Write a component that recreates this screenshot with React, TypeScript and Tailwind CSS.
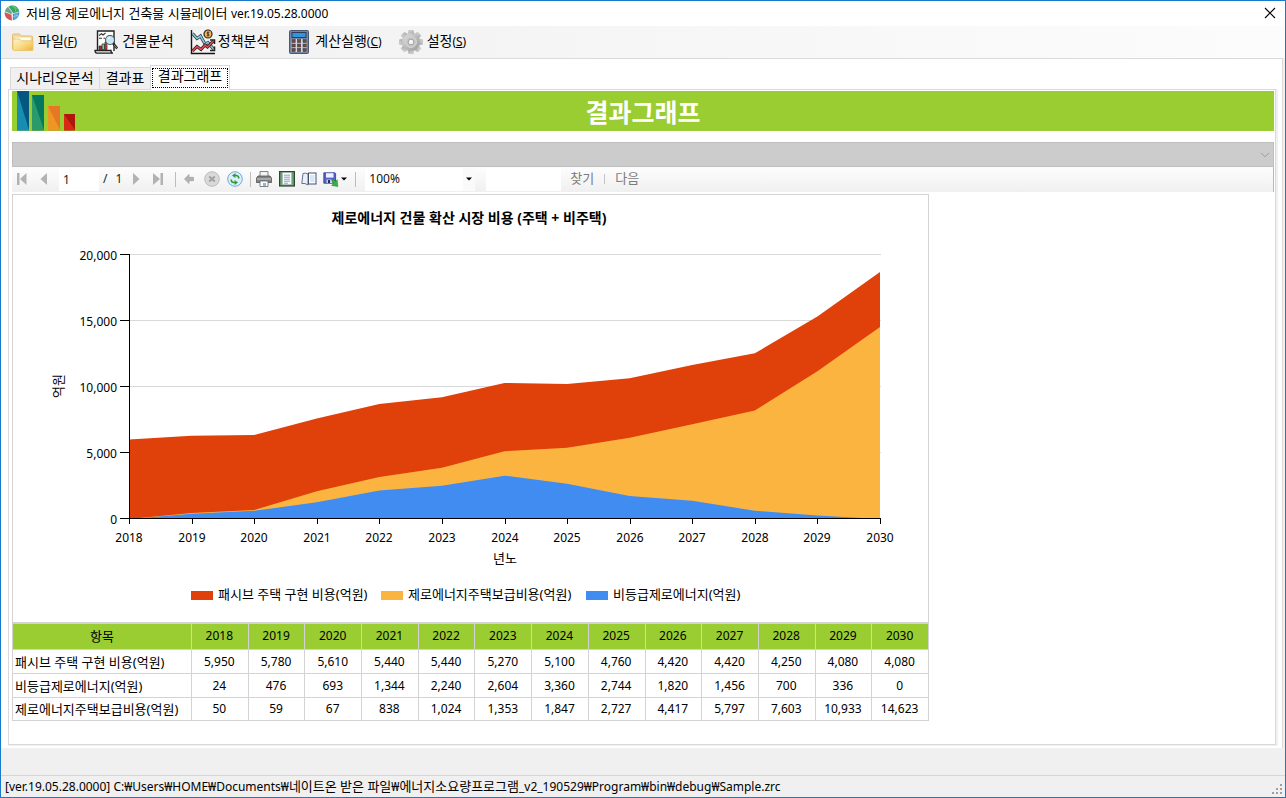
import React from "react";

const years = [2018, 2019, 2020, 2021, 2022, 2023, 2024, 2025, 2026, 2027, 2028, 2029, 2030];
const passive = [5950, 5780, 5610, 5440, 5440, 5270, 5100, 4760, 4420, 4420, 4250, 4080, 4080];
const ungraded = [24, 476, 693, 1344, 2240, 2604, 3360, 2744, 1820, 1456, 700, 336, 0];
const zeroHome = [50, 59, 67, 838, 1024, 1353, 1847, 2727, 4417, 5797, 7603, 10933, 14623];

const rows = [
  { name: "패시브 주택 구현 비용(억원)", values: passive },
  { name: "비등급제로에너지(억원)", values: ungraded },
  { name: "제로에너지주택보급비용(억원)", values: zeroHome },
];

const X0 = 116;
const X1 = 868;
const Y0 = 324;
const PLOT_H = 264;
const px = (i: number) => X0 + ((X1 - X0 - 1) * i) / 12;
const py = (v: number) => Y0 - (v / 20000) * PLOT_H;
const area = (vals: number[], drop = 0) =>
  `${X0},${Y0} ` + vals.map((v, i) => `${px(i)},${Math.min(Y0, py(v) + drop)}`).join(" ") + ` ${X1 - 1},${Y0}`;

const blueTop = ungraded;
const yellowTop = ungraded.map((v, i) => v + zeroHome[i]);
const redTop = yellowTop.map((v, i) => v + passive[i]);

function AppLogo() {
  return (
    <svg width="16" height="16" viewBox="0 0 16 16" aria-hidden="true">
      <circle cx="8" cy="8" r="7.4" fill="#dfe9ec" />
      <path d="M8 .6 A7.4 7.4 0 0 1 15.3 6.4 L9.4 8.2 L4.6 1.4 Q6.2 .6 8 .6 Z" fill="#38a860" />
      <path d="M4 1.8 L8.4 8 L7 9 L1 6 Q1.8 3.2 4 1.8 Z" fill="#7f9ba6" />
      <path d="M2.6 4 L7 6.4 L8 8.2 L1 6.4 Z" fill="#55b676" />
      <path d="M.7 7.2 L7.4 9.8 L8 15.4 A7.4 7.4 0 0 1 .7 7.2 Z" fill="#d9525a" />
      <path d="M15.3 7.2 L9 9 V15.3 A7.4 7.4 0 0 0 15.3 7.2 Z" fill="#3c8ed8" />
      <path d="M11 8.6 V14.6 M13 8 V13.2 M9 11.6 L14.6 10" stroke="#b9dcf5" fill="none" strokeWidth=".6" />
      <path d="M10.5 1.4 L12 7 M8 1 L13.8 4" stroke="#9ad6ae" fill="none" strokeWidth=".5" />
    </svg>
  );
}

function FolderIcon() {
  return (
    <svg width="24" height="24" viewBox="0 0 24 24" aria-hidden="true">
      <defs>
        <linearGradient id="folder" x1="0" y1="0" x2="1" y2="1">
          <stop offset="0" stopColor="#fdf3ce" />
          <stop offset=".5" stopColor="#f9dc85" />
          <stop offset="1" stopColor="#edb52f" />
        </linearGradient>
      </defs>
      <path d="M1.5 5 Q1.5 4 2.5 4 H8.5 L10.5 6 H20.5 Q21.5 6 21.5 7 V19 H1.5 Z" fill="#f3d9a0" stroke="#e4bd78" />
      <path d="M4 7.5 H19.5 V13 H4 Z" fill="#fffbe9" />
      <path d="M2 9 H8.5 L10.5 10.8 H22 V19.5 Q22 20.5 21 20.5 H3 Q2 20.5 2 19.5 Z" fill="url(#folder)" stroke="#e8c070" strokeWidth=".8" />
    </svg>
  );
}

function BuildingAnalysisIcon() {
  return (
    <svg width="24" height="24" viewBox="0 0 24 24" aria-hidden="true">
      <path d="M3.5 21 V1 H20 V21" fill="#fcfcfc" stroke="#222" strokeWidth="1.4" />
      <path d="M1 20.5 H17 Q17 23.2 19 23.2 H3 Q1 23 1 20.5 Z" fill="#f5f5f5" stroke="#222" strokeWidth="1.3" />
      <path d="M5 5.5 L7.5 3.8 L9 5 L11.5 3 M5 8.2 H8 M9.5 8.2 H11" stroke="#333" fill="none" strokeWidth="1.1" />
      <path d="M5 16 H7.5 V19.5 H5 Z" fill="#a52b3d" stroke="#222" strokeWidth=".7" />
      <path d="M8 14 H10.5 V19.5 H8 Z" fill="#85c97c" stroke="#222" strokeWidth=".7" />
      <path d="M11 12 H13 V19.5 H11 Z" fill="#d64e54" stroke="#222" strokeWidth=".7" />
      <circle cx="16" cy="10" r="4.5" fill="#c5e7f5" stroke="#45545d" strokeWidth="1.1" />
      <path d="M14 9 L16 7.3" stroke="#fff" />
      <path d="M19.2 13.5 L23.2 18.5" stroke="#222" strokeWidth="2.5" />
      <path d="M20 15 L22.8 18" stroke="#56b5d0" strokeWidth=".9" />
    </svg>
  );
}

function PolicyIcon() {
  return (
    <svg width="26" height="26" viewBox="0 0 26 26" aria-hidden="true">
      <path d="M1.5 1 V24.5 H25" stroke="#151515" strokeWidth="1.4" fill="none" />
      <path d="M2.5 4.5 L7 9.5 L10.5 7 L15 15 L18 13.5 L23.5 20" stroke="#1d3036" strokeWidth="3" fill="none" />
      <path d="M2.5 4.5 L7 9.5 L10.5 7 L15 15 L18 13.5 L23.5 20" stroke="#8ac9d8" strokeWidth="1.6" fill="none" />
      <path d="M2.5 22 L7 17.5 L11 20.5 L15 16 L17.5 18 L23.5 12" stroke="#321819" strokeWidth="3" fill="none" />
      <path d="M2.5 22 L7 17.5 L11 20.5 L15 16 L17.5 18 L23.5 12" stroke="#db4d5b" strokeWidth="1.6" fill="none" />
      <path d="M20 11 H24.5 V15 M20 21.5 H24.5 V17.5" stroke="#222" strokeWidth="1.5" fill="none" />
      <circle cx="18" cy="5" r="4" fill="#eab667" stroke="#322618" strokeWidth="1.2" />
      <path d="M19.3 3.3 H17.3 Q16.5 4.9 18 5 Q19.8 5.3 18.8 6.7 H16.7 M18 2.5 V7.5" stroke="#3a2a1a" strokeWidth=".8" fill="none" />
    </svg>
  );
}

function CalculatorIcon() {
  return (
    <svg width="20" height="24" viewBox="0 0 20 24" aria-hidden="true">
      <rect x=".5" y=".5" width="19" height="23" rx="1" fill="#7385a2" stroke="#4a5872" />
      <rect x="3" y="2.5" width="14" height="5" fill="#3494dd" stroke="#2c3c55" />
      <rect x="2.5" y="9" width="15" height="13" fill="#d3d8e0" />
      {[9.5, 14, 18.5].map((y) =>
        [3, 8.5, 14].map((x) => (
          <rect key={`${x}-${y}`} x={x} y={y} width="3.2" height="3" fill="#6d4a3e" stroke="#3f3a44" strokeWidth=".6" />
        )),
      )}
    </svg>
  );
}

function GearIcon() {
  return (
    <svg width="24" height="24" viewBox="0 0 24 24" aria-hidden="true">
      <defs>
        <linearGradient id="gear" x1="0" y1="0" x2="1" y2="1">
          <stop offset="0" stopColor="#dedede" />
          <stop offset="1" stopColor="#9a9a9a" />
        </linearGradient>
      </defs>
      {[0, 45, 90, 135, 180, 225, 270, 315].map((a) => (
        <path key={a} d="M8.8 5 L9.8 .4 H14.2 L15.2 5 Z" fill="url(#gear)" stroke="#aaa" strokeWidth=".5" transform={`rotate(${a} 12 12)`} />
      ))}
      <circle cx="12" cy="12" r="8.8" fill="url(#gear)" />
      <circle cx="12" cy="12" r="5.4" fill="#c4c4c4" stroke="#d8d8d8" />
      <circle cx="12" cy="12" r="2.8" fill="#f5f5f5" stroke="#a5a5a5" />
    </svg>
  );
}

function BannerLogo() {
  return (
    <svg width="64" height="40" viewBox="0 0 64 40" aria-hidden="true">
      <path d="M5 0 H17 V39 H5 Z" fill="#178db4" />
      <path d="M5 0 H17 V39 Z" fill="#05577f" />
      <path d="M20 4 H32 V39 H20 Z" fill="#2a9a6b" />
      <path d="M20 4 H32 V39 Z" fill="#04795f" />
      <path d="M36 15 H48 V39 H36 Z" fill="#ee9624" />
      <path d="M36 15 H48 V39 Z" fill="#e67725" />
      <path d="M52 23 H63 V39 H52 Z" fill="#d82a12" />
      <path d="M52 23 H63 V39 Z" fill="#ad160b" />
      <path d="M5 39.5 H17" stroke="#4a9f90" />
      <path d="M20 39.5 H32" stroke="#55a559" />
      <path d="M36 39.5 H48" stroke="#c8a526" />
      <path d="M52 39.5 H63" stroke="#bf651f" />
    </svg>
  );
}

type ToolProps = { label: string; children: React.ReactNode };
function Tool({ label, children }: ToolProps) {
  return (
    <button type="button" aria-label={label} className="flex h-5 w-5 items-center justify-center">
      {children}
    </button>
  );
}

function Caret() {
  return (
    <svg width="6" height="4" viewBox="0 0 6 4" aria-hidden="true">
      <path d="M0 .5 H6 L3 3.5 Z" fill="#000" />
    </svg>
  );
}

function ReportToolbar() {
  return (
    <div className="flex h-[25px] items-center border-r border-[#b8b8b8] bg-linear-to-b from-[#fdfdfd] to-[#f0f0f0] pb-px text-xs">
      <Tool label="첫 페이지">
        <svg width="12" height="12" viewBox="0 0 12 12">
          <path d="M1 0 H3.5 V12 H1 Z M10.5 0 V12 L4 6 Z" fill="#b2b2b2" />
        </svg>
      </Tool>
      <span className="w-[2px]" />
      <Tool label="이전 페이지">
        <svg width="8" height="12" viewBox="0 0 8 12">
          <path d="M7 0 V12 L.5 6 Z" fill="#b2b2b2" />
        </svg>
      </Tool>
      <input aria-label="현재 페이지" defaultValue="1" className="ml-[5px] h-[23px] w-10 bg-white pl-1 text-[#222]" />
      <span className="ml-1 flex gap-2 text-[#222]">
        <span>/</span>
        <span>1</span>
      </span>
      <span className="w-1" />
      <Tool label="다음 페이지">
        <svg width="8" height="12" viewBox="0 0 8 12">
          <path d="M1 0 V12 L7.5 6 Z" fill="#b2b2b2" />
        </svg>
      </Tool>
      <span className="w-[2px]" />
      <Tool label="마지막 페이지">
        <svg width="12" height="12" viewBox="0 0 12 12">
          <path d="M8.5 0 H11 V12 H8.5 Z M1 0 V12 L8 6 Z" fill="#b2b2b2" />
        </svg>
      </Tool>
      <span className="ml-[7px] h-[15px] w-px bg-[#bdbdbd]" />
      <span className="w-[3px]" />
      <Tool label="뒤로">
        <svg width="10" height="10" viewBox="0 0 10 10">
          <path d="M5 .5 V3.3 H9.5 V6.7 H5 V9.5 L.5 5 Z" fill="#b3b3b3" stroke="#999" strokeWidth=".6" />
        </svg>
      </Tool>
      <span className="w-[3px]" />
      <Tool label="중지">
        <svg width="16" height="16" viewBox="0 0 16 16">
          <circle cx="8" cy="8" r="7.3" fill="#d9d9d9" stroke="#bcbcbc" />
          <path d="M5.2 5.5 L10.8 10.5 M10.8 5.5 L5.2 10.5" stroke="#a2a2a2" strokeWidth="2" />
        </svg>
      </Tool>
      <span className="w-[3px]" />
      <Tool label="새로 고침">
        <svg width="16" height="16" viewBox="0 0 16 16">
          <circle cx="8" cy="8" r="7.3" fill="#dceefb" stroke="#75a9d6" />
          <path d="M8.4 2 L5 4.5 L8.4 7 Z M7.6 14 L11 11.5 L7.6 9 Z" fill="#2e9d38" />
          <path d="M8 4.5 H9.5 Q11.8 4.8 11.8 7.6 M8 11.5 H6.5 Q4.2 11.2 4.2 8.4" stroke="#2e9d38" strokeWidth="1.6" fill="none" />
        </svg>
      </Tool>
      <span className="ml-[5px] h-[15px] w-px bg-[#bdbdbd]" />
      <span className="w-[3px]" />
      <Tool label="인쇄">
        <svg width="16" height="16" viewBox="0 0 16 16">
          <path d="M4 .5 H12 V6 H4 Z" fill="#f4f4f4" stroke="#666" strokeWidth=".8" />
          <path d="M2 5 H14 L15.6 7.2 V11.5 H.4 V7.2 Z" fill="#828282" stroke="#505050" strokeWidth=".8" />
          <path d="M1 8 H15" stroke="#cfcfcf" />
          <path d="M4 10 H12 V15.5 H4 Z" fill="#fff" stroke="#666" strokeWidth=".8" />
          <path d="M7 12 H10 V15 H7 Z" fill="#7cbce8" />
        </svg>
      </Tool>
      <span className="w-[3px]" />
      <Tool label="인쇄 모양">
        <svg width="16" height="16" viewBox="0 0 16 16">
          <rect x=".6" y=".6" width="14.8" height="14.4" fill="#6f9f78" stroke="#2b4633" strokeWidth="1.2" />
          <rect x="3.5" y="1.6" width="9" height="12" fill="#f7fbff" stroke="#9eb4a4" strokeWidth=".5" />
          <path d="M5 4.2 H11 M5 6.2 H11 M5 8.2 H11 M5 10.2 H11 M5 12.2 H9" stroke="#7b86b0" strokeWidth=".8" />
        </svg>
      </Tool>
      <span className="w-[2px]" />
      <Tool label="페이지 설정">
        <svg width="16" height="14" viewBox="0 0 16 14">
          <path d="M.8 11.5 L2 1.5 Q4.5 .5 7 2 V13 Q4 10.8 .8 11.5 Z" fill="#edf1f7" stroke="#66718c" />
          <rect x="7.5" y="1" width="7.5" height="11" fill="#fff" stroke="#3f526f" />
          <path d="M9 3 H13.5 V10 H9 Z" fill="#dae6f6" />
        </svg>
      </Tool>
      <span className="w-[4px]" />
      <button type="button" aria-label="내보내기" className="flex items-center">
        <svg width="18" height="18" viewBox="0 0 18 18">
          <path d="M.8 2.8 H12 L12.6 3.5 V13.2 H.8 Z" fill="#5562c8" stroke="#303a8c" strokeWidth=".8" />
          <path d="M3 3.2 H10.5 V7.6 H3 Z" fill="#eef1ff" />
          <path d="M3.5 9.5 H9.5 V13 H3.5 Z" fill="#c9cde3" />
          <path d="M5 10 H7 V13 H5 Z" fill="#26305e" />
          <path d="M8.4 9.6 L10.4 9.4 L12.6 11.4 L14.2 9.8 L14.8 16.6 L8.6 15.4 L10.6 13.4 Z" fill="#32b53e" stroke="#1c7c2a" strokeWidth=".5" />
        </svg>
        <Caret />
      </button>
      <span className="ml-2 h-[15px] w-px bg-[#bdbdbd]" />
      <div className="relative ml-[9px] h-[23px] w-[110px] bg-white">
        <select aria-label="확대/축소" className="h-full w-full appearance-none bg-transparent pl-1 text-[#111]" defaultValue="100%">
          <option>100%</option>
        </select>
        <span className="pointer-events-none absolute inset-y-0 right-0 flex w-3 items-center justify-center bg-[#fafafa]">
          <Caret />
        </span>
      </div>
      <input aria-label="찾을 텍스트" className="ml-[11px] h-[23px] w-[75px] bg-white" />
      <button type="button" className="ml-[9px] text-[13px] text-[#7c7c7c]">찾기</button>
      <span className="ml-[10px] h-[10px] w-px bg-[#c4c4c4]" />
      <button type="button" className="ml-[10px] text-[13px] text-[#7c7c7c]">다음</button>
    </div>
  );
}

function Chart() {
  return (
    <svg width="915" height="427" viewBox="0 0 915 427" role="img" aria-label="제로에너지 건물 확산 시장 비용" className="block text-xs" fill="#000">
      <text x="456" y="28" textAnchor="middle" fontSize="14" fontWeight="700">제로에너지 건물 확산 시장 비용 (주택 + 비주택)</text>
      {[0, 5000, 10000, 15000, 20000].map((v) => {
        const y = 323.5 - (v / 20000) * PLOT_H;
        return (
          <g key={v}>
            <path d={`M117 ${y} H868`} stroke="#d9d9d9" />
            <text x="104" y={y + 5} textAnchor="end">{v.toLocaleString("en-US")}</text>
          </g>
        );
      })}
      <polygon points={area(redTop)} fill="#e0400a" />
      <polygon points={area(yellowTop, 1)} fill="#fcb441" />
      <polygon points={area(blueTop, 1)} fill="#418cf0" />
      <path d="M116.5 59 V324" stroke="#000" />
      <path d="M107 323.5 H868" stroke="#000" />
      {[59.5, 125.5, 191.5, 257.5].map((y) => (
        <path key={y} d={`M107 ${y} H117`} stroke="#000" />
      ))}
      {years.map((year, i) => (
        <g key={year}>
          <path d={`M${Math.round(px(i)) + 0.5} 323 V329`} stroke="#000" />
          <text x={Math.round(px(i))} y="347" textAnchor="middle">{year}</text>
        </g>
      ))}
      <text x="492" y="368" textAnchor="middle" fontSize="13">년노</text>
      <text transform="translate(50 191) rotate(-90)" textAnchor="middle" fontSize="13">억원</text>
      <g fontSize="13">
        <rect x="178" y="396" width="22" height="9" fill="#e0400a" />
        <text x="205" y="404">패시브 주택 구현 비용(억원)</text>
        <rect x="368" y="396" width="22" height="9" fill="#fcb441" />
        <text x="395" y="404">제로에너지주택보급비용(억원)</text>
        <rect x="573" y="396" width="22" height="9" fill="#418cf0" />
        <text x="600" y="404">비등급제로에너지(억원)</text>
      </g>
    </svg>
  );
}

function DataTable() {
  return (
    <table className="-mr-px -ml-px w-[917px] table-fixed border-collapse text-center text-xs">
      <colgroup>
        <col className="w-[179px]" />
        {years.map((y) => (
          <col key={y} />
        ))}
      </colgroup>
      <thead>
        <tr className="h-[26px] bg-[#9acd32]">
          <th scope="col" className="border border-[#d3d3d3] p-0 pb-[2px] text-[13px] leading-4 font-normal">항목</th>
          {years.map((y) => (
            <th key={y} scope="col" className="border border-[#d3d3d3] p-0 pr-px pb-[2px] leading-4 font-normal">{y}</th>
          ))}
        </tr>
      </thead>
      <tbody>
        {rows.map((r) => (
          <tr key={r.name} className="h-6 last:h-[23px]">
            <th scope="row" className="border border-[#d3d3d3] py-0 pr-0 pl-[2px] text-left text-[13px] leading-4 font-normal whitespace-nowrap">{r.name}</th>
            {r.values.map((v, i) => (
              <td key={years[i]} className="border border-[#d3d3d3] p-0 pr-px leading-4">{v.toLocaleString("en-US")}</td>
            ))}
          </tr>
        ))}
      </tbody>
    </table>
  );
}

const menus = [
  { text: "파일", hotkey: "F", icon: <FolderIcon />, gap: "ml-[10px] gap-[3px]" },
  { text: "건물분석", icon: <BuildingAnalysisIcon />, gap: "ml-[17px] gap-[4px]" },
  { text: "정책분석", icon: <PolicyIcon />, gap: "ml-[16px] gap-[2px]" },
  { text: "계산실행", hotkey: "C", icon: <CalculatorIcon />, gap: "ml-[20px] gap-[6px]" },
  { text: "설정", hotkey: "S", icon: <GearIcon />, gap: "ml-[17px] gap-[4px]" },
];

export default function App() {
  return (
    <div className="flex min-h-screen flex-col border border-[#1979ca] bg-[#f0f0f0] font-['Noto_Sans','Noto_Sans_CJK_KR',sans-serif] text-[13px] leading-4 text-black">
      <header className="flex h-[25px] items-center bg-white pr-[9px] pb-px pl-[3px]">
        <AppLogo />
        <h1 className="ml-[6px] flex-1 text-[13px]">
          저비용 제로에너지 건축물 시뮬레이터 <span className="text-xs">ver.19.05.28.0000</span>
        </h1>
        <button type="button" aria-label="닫기">
          <svg width="12" height="12" viewBox="0 0 12 12">
            <path d="M1 1 L11 11 M11 1 L1 11" stroke="#000" strokeWidth="1.1" />
          </svg>
        </button>
      </header>

      <nav className="flex h-8 items-center bg-linear-to-r from-[#f0f0f0] to-[#fcfcfc]">
        {menus.map((m) => (
          <button key={m.text} type="button" className={`flex items-center text-sm leading-4 ${m.gap}`}>
            {m.icon}
            <span className="pb-[2px]">
              {m.text}
              {m.hotkey && (
                <span className="text-xs">
                  (<u>{m.hotkey}</u>)
                </span>
              )}
            </span>
          </button>
        ))}
      </nav>

      <main className="mr-[2px] flex flex-1 flex-col border-t border-r border-[#dadada] bg-white pr-1 pb-[2px] pl-[7px]">
        <div role="tablist" className="mt-[6px] flex items-end pl-[2px] text-sm leading-4">
          <button type="button" role="tab" aria-selected="false" className="h-[22px] w-[90px] border border-b-0 border-[#d9d9d9] bg-[#f0f0f0] pb-[2px]">시나리오분석</button>
          <button type="button" role="tab" aria-selected="false" className="h-[22px] w-[50px] border-t border-[#d9d9d9] bg-[#f0f0f0] pb-[2px]">결과표</button>
          <button type="button" role="tab" aria-selected="true" className="relative z-10 -mb-px flex h-[25px] w-[80px] border border-b-0 border-[#d9d9d9] bg-white p-px pt-[2px]">
            <span className="flex h-[20px] flex-1 justify-center border border-dotted border-black leading-[14px]">결과그래프</span>
          </button>
        </div>

        <div className="flex flex-1 border-r-2 border-b border-[#f0f0f0]">
          <section className="flex min-w-0 flex-1 flex-col border border-[#d9d9d9] pt-px pr-px pl-[3px]">
            <div className="grid h-10 grid-cols-[64px_1fr_64px] items-center bg-[#9acd32] text-white">
              <BannerLogo />
              <h2 className="pt-px text-center text-[25px] leading-8 font-bold">결과그래프</h2>
            </div>

            <div className="relative mt-[11px] h-[25px]">
              <select disabled aria-label="그래프 선택" className="h-full w-full appearance-none border border-[#bfbfbf] bg-[#cccccc] opacity-100" />
              <svg className="pointer-events-none absolute top-[10px] right-1" width="10" height="6" viewBox="0 0 10 6" aria-hidden="true">
                <path d="M1 .8 L5 4.8 L9 .8" stroke="#9c9c9c" fill="none" />
              </svg>
            </div>

            <ReportToolbar />

            <div className="mt-[2px] w-[917px] border border-b-0 border-[#d3d3d3]">
              <Chart />
              <div className="border-t border-[#d3d3d3]">
                <DataTable />
              </div>
            </div>
          </section>
        </div>
      </main>

      <div className="h-[27px]" />
      <footer className="flex h-[22px] items-center border-t border-[#d7d7d7] pr-[2px] pl-1">
        <p className="flex-1 whitespace-nowrap">
          <span className="text-xs">[ver.19.05.28.0000] C:₩Users₩HOME₩Documents₩</span>네이트온 받은 파일<span className="text-xs">₩</span>에너지소요량프로그램<span className="text-xs">_v2_190529₩Program₩bin₩debug₩Sample.zrc</span>
        </p>
        <svg width="12" height="12" viewBox="0 0 12 12" aria-hidden="true" className="mt-[5px]">
          <path d="M9 1 h2 v2 h-2 Z M5 5 h2 v2 h-2 Z M9 5 h2 v2 h-2 Z M1 9 h2 v2 h-2 Z M5 9 h2 v2 h-2 Z M9 9 h2 v2 h-2 Z" fill="#a0a0a0" />
        </svg>
      </footer>
    </div>
  );
}
